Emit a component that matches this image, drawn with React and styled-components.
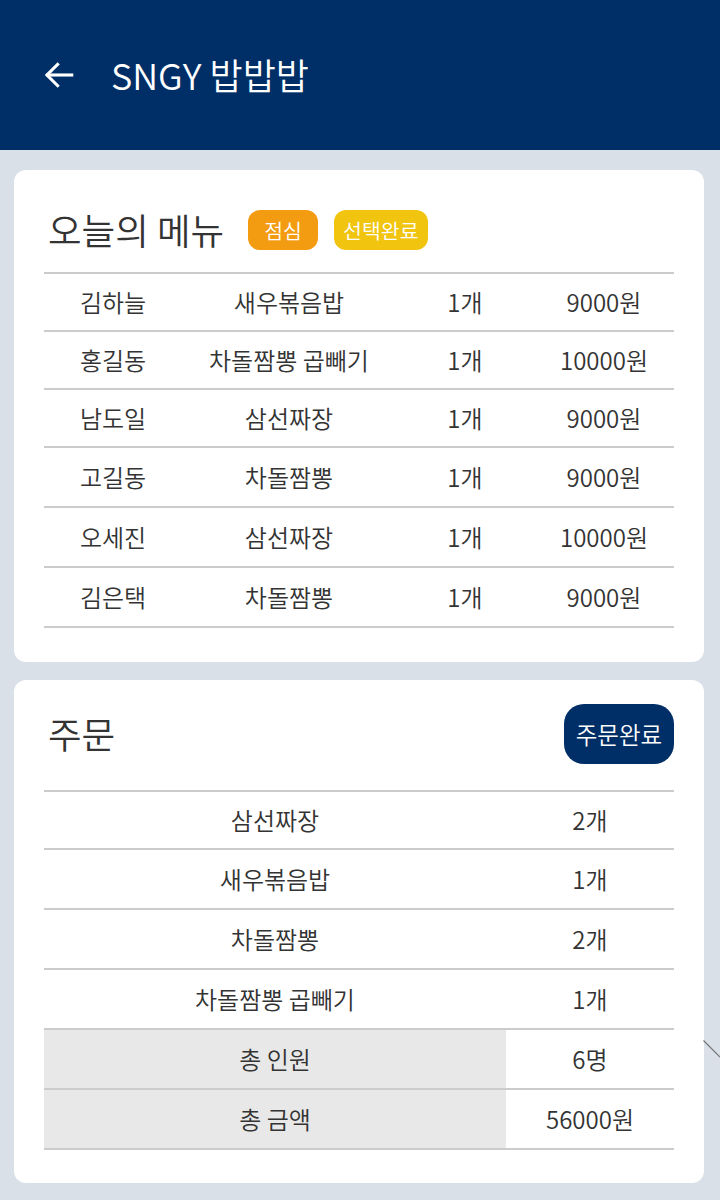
import React from "react";
import styled, { createGlobalStyle } from "styled-components";

const Global = createGlobalStyle`
  html, body { margin: 0; padding: 0; }
  body {
    background: #d9e0e8;
    font-family: "Noto Sans CJK KR", "Noto Sans", sans-serif;
    color: #333;
  }
`;

const Page = styled.div`
  position: relative;
  min-height: 1200px;
  background: #d9e0e8;
`;

const Header = styled.header`
  height: 150px;
  background: #002e66;
  display: flex;
  align-items: center;
  padding-left: 40px;
  gap: 33px;
  box-sizing: border-box;
  color: #fff;
`;

const BackButton = styled.span`
  display: flex;
  width: 38px;
  height: 38px;
  align-items: center;
  justify-content: center;
`;

const HeaderTitle = styled.h1`
  margin: 0;
  font-size: 36px;
  font-weight: 350;
  line-height: 1;
  padding-bottom: 2px;
`;

const Content = styled.main`
  display: flex;
  flex-direction: column;
  gap: 18px;
  padding: 20px 16px 0 14px;
`;

const Card = styled.section`
  background: #fff;
  border-radius: 12px;
  padding: ${(p) => p.$pad};
`;

const CardHead = styled.div`
  display: flex;
  align-items: center;
  height: ${(p) => p.$h}px;
  margin-bottom: ${(p) => p.$mb}px;
  padding-left: 4px;
`;

const CardTitle = styled.h2`
  margin: 0 24px 0 0;
  font-size: 36.5px;
  font-weight: 350;
  color: #333;
  line-height: 1;
  flex: ${(p) => (p.$grow ? 1 : "none")};
`;

const Badge = styled.span`
  min-width: 70px;
  height: 40px;
  box-sizing: border-box;
  padding: 0 9px;
  margin-right: 16px;
  border-radius: 12px;
  background: ${(p) => p.$bg};
  color: #fff;
  font-size: 20.5px;
  font-weight: 350;
  display: inline-flex;
  align-items: center;
  justify-content: center;
`;

const ActionButton = styled.button`
  width: 110px;
  height: 60px;
  border: none;
  border-radius: 20px;
  background: #002e66;
  color: #fff;
  font-family: inherit;
  font-size: 23.5px;
  font-weight: 350;
  padding: 0;
`;

const Table = styled.table`
  width: 630px;
  border-collapse: collapse;
  table-layout: fixed;
  border-top: 2px solid #cccccc;
`;

const Cell = styled.td`
  height: ${(p) => p.$h}px;
  padding: 0 0 2px 0;
  box-sizing: border-box;
  text-align: center;
  font-size: 24px;
  font-weight: 350;
  color: #333;
  border-bottom: 2px solid #cccccc;
  background: ${(p) => (p.$shade ? "#e8e8e8" : "#fff")};
  white-space: nowrap;
`;

const Stray = styled.svg`
  position: absolute;
  left: 703px;
  top: 1040px;
`;

const menu = [
  ["김하늘", "새우볶음밥", "1개", "9000원"],
  ["홍길동", "차돌짬뽕 곱빼기", "1개", "10000원"],
  ["남도일", "삼선짜장", "1개", "9000원"],
  ["고길동", "차돌짬뽕", "1개", "9000원"],
  ["오세진", "삼선짜장", "1개", "10000원"],
  ["김은택", "차돌짬뽕", "1개", "9000원"],
];

const orders = [
  ["삼선짜장", "2개"],
  ["새우볶음밥", "1개"],
  ["차돌짬뽕", "2개"],
  ["차돌짬뽕 곱빼기", "1개"],
];

const totals = [
  ["총 인원", "6명"],
  ["총 금액", "56000원"],
];

export default function App() {
  return (
    <Page>
      <Global />
      <Header>
        <BackButton>
          <svg width="34" height="34" viewBox="0 0 24 24" fill="none" stroke="#fff" strokeWidth="2.2" strokeLinecap="square">
            <path d="M21 12H4" />
            <path d="M11 4.5L3.5 12L11 19.5" />
          </svg>
        </BackButton>
        <HeaderTitle>SNGY 밥밥밥</HeaderTitle>
      </Header>
      <Content>
        <Card $pad="40px 30px 34px 30px">
          <CardHead $h={40} $mb={22}>
            <CardTitle>오늘의 메뉴</CardTitle>
            <Badge $bg="#f39c12">점심</Badge>
            <Badge $bg="#f1c40f">선택완료</Badge>
          </CardHead>
          <Table>
            <colgroup>
              <col style={{ width: 138 }} />
              <col style={{ width: 214 }} />
              <col style={{ width: 138 }} />
              <col style={{ width: 140 }} />
            </colgroup>
            <tbody>
              {menu.map((r, i) => (
                <tr key={i}>
                  {r.map((c, j) => (
                    <Cell key={j} $h={i < 3 ? 58 : 60}>{c}</Cell>
                  ))}
                </tr>
              ))}
            </tbody>
          </Table>
        </Card>
        <Card $pad="24px 30px 33px 30px">
          <CardHead $h={60} $mb={26}>
            <CardTitle $grow>주문</CardTitle>
            <ActionButton>주문완료</ActionButton>
          </CardHead>
          <Table>
            <colgroup>
              <col style={{ width: 462 }} />
              <col style={{ width: 168 }} />
            </colgroup>
            <tbody>
              {orders.map((r, i) => (
                <tr key={i}>
                  <Cell $h={i === 0 ? 58 : 60}>{r[0]}</Cell>
                  <Cell $h={i === 0 ? 58 : 60}>{r[1]}</Cell>
                </tr>
              ))}
              {totals.map((r, i) => (
                <tr key={"t" + i}>
                  <Cell $h={60} $shade>{r[0]}</Cell>
                  <Cell $h={60}>{r[1]}</Cell>
                </tr>
              ))}
            </tbody>
          </Table>
        </Card>
      </Content>
      <Stray width="17" height="18" viewBox="0 0 17 18">
        <path d="M0.5 0.5L17 17" stroke="#777" strokeWidth="1.2" />
      </Stray>
    </Page>
  );
}
